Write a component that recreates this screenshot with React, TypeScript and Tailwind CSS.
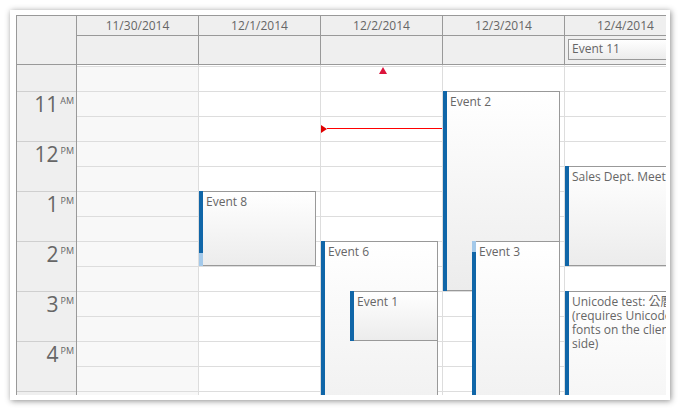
type CalEvent = {
  text: string;
  top: number;
  height: number;
  left: number;
  width: number;
  barFrom?: number;
  barTo?: number;
  nowrap?: boolean;
};

type Day = {
  label: string;
  weekend?: boolean;
  allDay?: string;
  events: CalEvent[];
  marker?: boolean;
};

const hours = [
  { h: "11", ap: "AM" },
  { h: "12", ap: "PM" },
  { h: "1", ap: "PM" },
  { h: "2", ap: "PM" },
  { h: "3", ap: "PM" },
  { h: "4", ap: "PM" },
];

const days: Day[] = [
  { label: "11/30/2014", weekend: true, events: [] },
  {
    label: "12/1/2014",
    events: [{ text: "Event 8", top: 126, height: 75, left: 0, width: 117, barFrom: 0, barTo: 62 }],
  },
  {
    label: "12/2/2014",
    marker: true,
    events: [
      { text: "Event 6", top: 176, height: 220, left: 0, width: 117 },
      { text: "Event 1", top: 226, height: 50, left: 29, width: 88 },
    ],
  },
  {
    label: "12/3/2014",
    events: [
      { text: "Event 2", top: 26, height: 200, left: 0, width: 117 },
      { text: "Event 3", top: 176, height: 220, left: 29, width: 88, barFrom: 11 },
    ],
  },
  {
    label: "12/4/2014",
    allDay: "Event 11",
    events: [
      { text: "Sales Dept. Meeting", top: 101, height: 100, left: 0, width: 117, nowrap: true },
      {
        text: "Unicode test: 公曆 (requires Unicode fonts on the client side)",
        top: 226,
        height: 220,
        left: 0,
        width: 117,
      },
    ],
  },
];

const slots = Array.from({ length: 14 }, (_, i) => i);

function EventBox({ ev }: { ev: CalEvent }) {
  const from = ev.barFrom ?? 0;
  const to = ev.barTo ?? ev.height;
  return (
    <div
      className="absolute flex"
      style={{ top: ev.top, left: ev.left, width: ev.width, height: ev.height }}
    >
      <div className="relative w-[4px] shrink-0 bg-[#a3c9ea]">
        <div className="absolute left-0 w-[4px] bg-[#1066a8]" style={{ top: from, height: to - from }} />
      </div>
      <div
        className={
          ev.nowrap
            ? "flex-1 overflow-hidden whitespace-nowrap border-y border-r border-[#999] bg-linear-to-b from-white to-[#ececec] pl-[3px] pt-[3px] text-[12px] leading-[14px] text-[#666]"
            : "flex-1 overflow-hidden border-y border-r border-[#999] bg-linear-to-b from-white to-[#ececec] pl-[3px] pt-[3px] text-[12px] leading-[14px] text-[#666]"
        }
      >
        {ev.text}
      </div>
    </div>
  );
}

export default function App() {
  return (
    <div
      className="h-[411px] w-[680px] bg-white p-[10px]"
      style={{ fontFamily: '"Open Sans", "Noto Sans CJK TC", sans-serif' }}
    >
      <div className="h-[390px] w-[660px] bg-white pl-[6px] pt-[5px] shadow-[1px_1px_6px_rgba(0,0,0,0.45)]">
        <div className="h-[380px] w-[650px] overflow-hidden">
          <div className="flex w-max border-l border-t border-[#999]">
            {/* row header */}
            <div className="w-[59px] shrink-0 bg-[#efefef] text-[#666]">
              <div className="h-[49px] border-b border-[#999]" />
              <div className="h-[26px]" />
              {hours.map((hr) => (
                <div key={hr.h} className="flex h-[50px] justify-end border-t border-[#cfcfcf] pr-[2px]">
                  <span className="mt-[2px] text-[21px] leading-none">{hr.h}</span>
                  <span className="ml-[2px] mt-[4px] text-[9px] leading-none">{hr.ap}</span>
                </div>
              ))}
              <div className="h-[50px] border-t border-[#cfcfcf]" />
            </div>

            {days.map((day, i) => (
              <div key={day.label} className="w-[122px] shrink-0">
                <div className="h-[20px] border-b border-l border-[#999] bg-[#efefef] text-center text-[12px] leading-[19px] text-[#666]">
                  {day.label}
                </div>
                <div className="h-[29px] border-b border-l border-[#999] bg-[#efefef] pl-[3px] pt-[3px]">
                  {day.allDay && (
                    <div className="h-[21px] w-[114px] border border-[#999] bg-linear-to-b from-white to-[#ececec] pl-[3px] text-[12px] leading-[17px] text-[#666]">
                      {day.allDay}
                    </div>
                  )}
                </div>
                <div
                  className={
                    i === 0
                      ? "relative border-l border-[#999] bg-white pt-px"
                      : "relative border-l border-[#ddd] bg-white pt-px"
                  }
                >
                  {slots.map((s) => (
                    <div
                      key={s}
                      className={
                        day.weekend
                          ? "h-[25px] border-t border-[#ddd] bg-[#f8f8f8]"
                          : "h-[25px] border-t border-[#ddd] bg-white"
                      }
                    />
                  ))}

                  {day.marker && (
                    <>
                      <div className="absolute left-[58px] top-[2px] h-0 w-0 border-x-[4px] border-b-[7px] border-x-transparent border-b-[#dc143c]" />
                      <div className="absolute left-0 top-[59px] flex h-[9px] w-[122px] items-center">
                        <div className="h-0 w-0 border-y-[4px] border-l-[6px] border-y-transparent border-l-[#e00000]" />
                        <div className="h-px flex-1 bg-[#ff0000]" />
                      </div>
                    </>
                  )}

                  {day.events.map((ev) => (
                    <EventBox key={ev.text} ev={ev} />
                  ))}
                </div>
              </div>
            ))}
          </div>
        </div>
      </div>
    </div>
  );
}
